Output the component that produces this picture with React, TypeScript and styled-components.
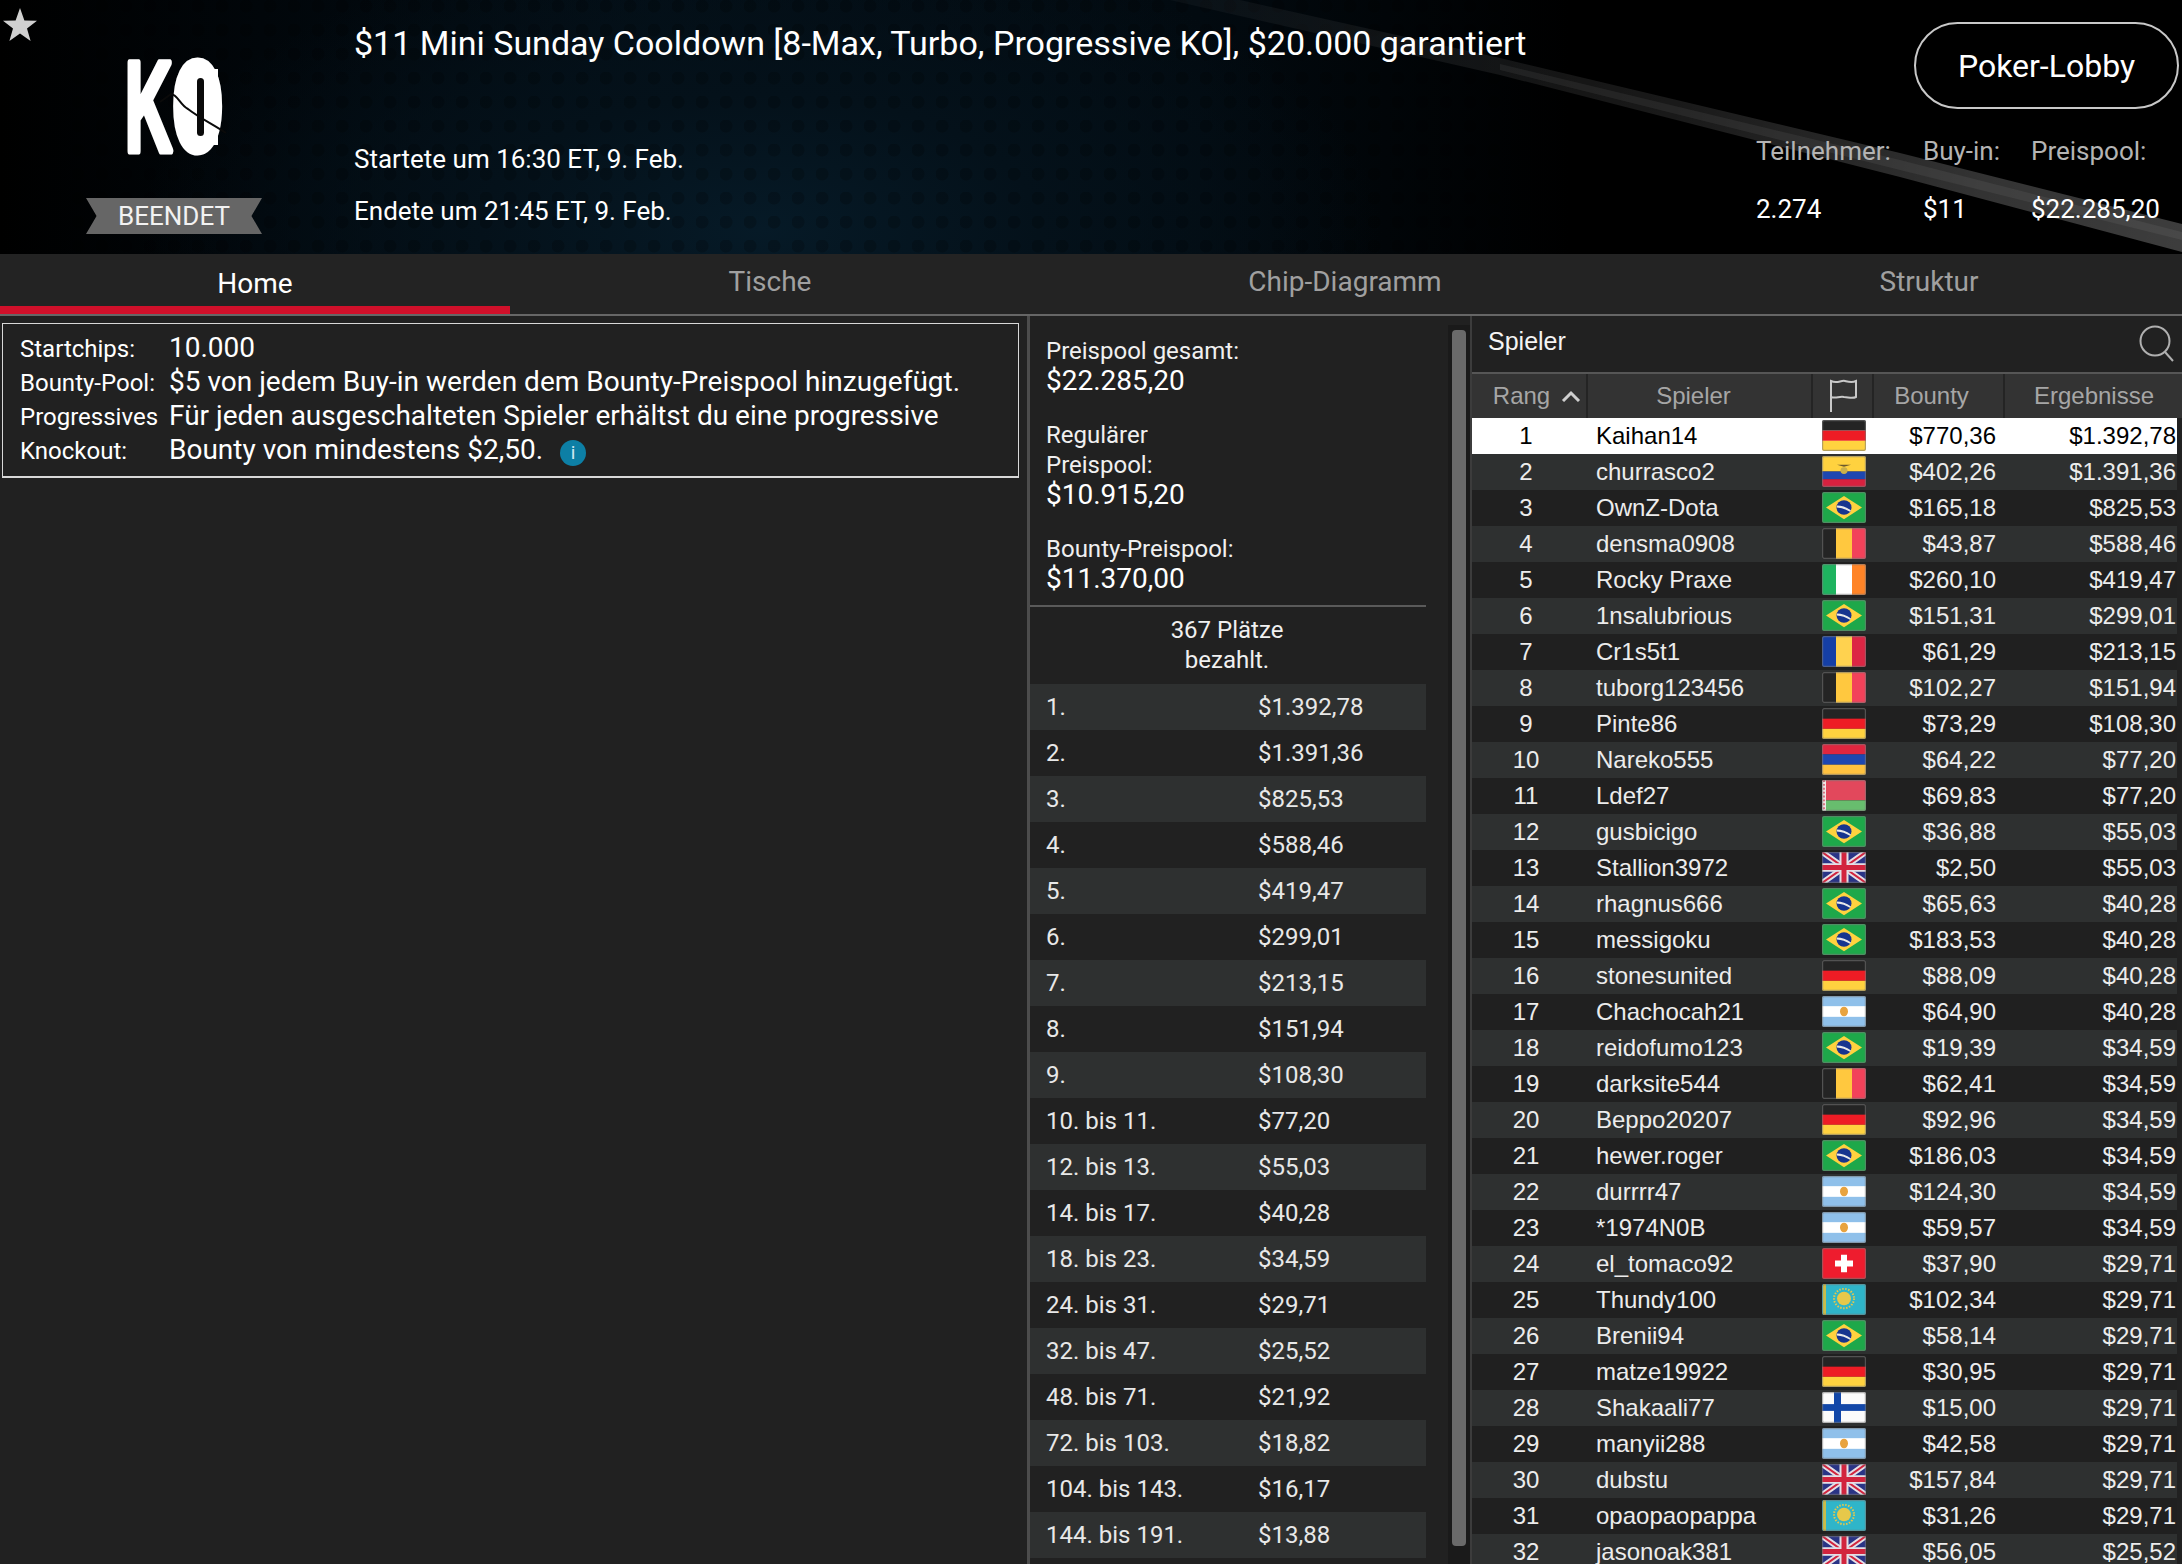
import React from "react";
import styled, { createGlobalStyle } from "styled-components";

const Global = createGlobalStyle`
  html, body { margin: 0; padding: 0; background: #212121; }
  body { width: 2182px; height: 1564px; overflow: hidden; font-family: Roboto, "Liberation Sans", sans-serif; color: #fff; }
  * { box-sizing: border-box; }
`;

const Page = styled.div`
  width: 2182px;
  height: 1564px;
  display: flex;
  flex-direction: column;
  overflow: hidden;
`;

const Hero = styled.header`
  position: relative;
  flex: 0 0 254px;
  display: flex;
  overflow: hidden;
  background:
    radial-gradient(circle at 6px 6px, rgba(0, 0, 0, 0.2) 0 6px, transparent 7px) 0 0 / 24px 24px,
    radial-gradient(ellipse 620px 300px at 760px 230px, #061a27 0%, #04111a 45%, rgba(0, 0, 0, 0) 100%),
    linear-gradient(90deg, #000 0%, #01060a 12%, #030e16 30%, #020a10 55%, #000 72%);
`;

const StreakArt = styled.svg`
  position: absolute;
  inset: 0;
`;

const StarIcon = styled.svg`
  position: absolute;
  left: 2px;
  top: 7px;
`;

const LogoColumn = styled.div`
  position: relative;
  flex: 0 0 354px;
  display: flex;
  flex-direction: column;
  align-items: flex-start;
  padding: 59px 0 0 86px;
`;

const KoLogo = styled.svg`
  margin-left: 36px;
  display: block;
  overflow: visible;
`;

const Ribbon = styled.div`
  margin-top: 43px;
  width: 176px;
  height: 36px;
  background: #666;
  clip-path: polygon(0 0, 100% 0, 94% 50%, 100% 100%, 0 100%, 6% 50%);
  display: flex;
  align-items: center;
  justify-content: center;
  font-size: 26px;
  color: #f2f2f2;
`;

const InfoColumn = styled.div`
  position: relative;
  flex: 1;
  padding-top: 23px;
`;

const Title = styled.h1`
  margin: 0 0 76px;
  font-size: 34px;
  line-height: 40px;
  font-weight: 400;
  color: #fff;
`;

const TimeLine = styled.div`
  font-size: 26px;
  line-height: 40px;
  margin-bottom: 12px;
  color: #fff;
`;

const StatsColumn = styled.div`
  position: relative;
  flex: 0 0 426px;
  display: flex;
  flex-direction: column;
  padding-top: 22px;
`;

const LobbyButton = styled.button`
  align-self: flex-end;
  margin-right: 3px;
  width: 265px;
  height: 87px;
  border: 2px solid #c8c8c8;
  border-radius: 44px;
  background: #000;
  color: #fff;
  font-family: Roboto, sans-serif;
  font-size: 32px;
  padding: 0;
`;

const StatsGrid = styled.div`
  margin-top: 24px;
  display: grid;
  grid-template-columns: 167px 108px 1fr;
  row-gap: 22px;
  line-height: 36px;
  font-size: 26px;
`;

const StatLabel = styled.div`
  color: #b4b4b4;
`;

const StatValue = styled.div`
  color: #fff;
`;

const TabBar = styled.nav`
  flex: 0 0 60px;
  display: flex;
  background: #232323;
  border-bottom: 2px solid #666;
`;

const Tab = styled.div<{ $w: number; $active?: boolean; $shift?: number }>`
  position: relative;
  flex: 0 0 ${(p) => p.$w}px;
  display: flex;
  align-items: center;
  justify-content: center;
  height: ${(p) => (p.$active ? 60 : 53)}px;
  padding-left: ${(p) => p.$shift ?? 0}px;
  padding-top: ${(p) => (p.$active ? 6 : 1)}px;
  font-size: 28px;
  color: ${(p) => (p.$active ? "#fff" : "#a0a0a0")};
  border-bottom: ${(p) => (p.$active ? "8px solid #d0102a" : "none")};
`;

const Main = styled.main`
  flex: 1;
  display: flex;
  min-height: 0;
  overflow: hidden;
`;

const LeftPane = styled.section`
  flex: 0 0 1027px;
  padding: 7px 0 0 2px;
`;

const RulesBox = styled.div`
  width: 1017px;
  height: 155px;
  border: 1px solid #d8d8d8;
  border-bottom-width: 2px;
  padding: 7px 0 0 17px;
  display: grid;
  grid-template-columns: 149px 1fr;
  grid-auto-rows: 34px;
  align-items: baseline;
`;

const RuleLabel = styled.div`
  font-size: 24px;
  color: #fff;
`;

const RuleValue = styled.div`
  font-size: 28px;
  color: #fff;
`;

const InfoDot = styled.span`
  display: inline-flex;
  align-items: center;
  justify-content: center;
  width: 26px;
  height: 26px;
  margin-left: 17px;
  border-radius: 50%;
  background: #0d7fa5;
  color: #cfe8f0;
  font-size: 19px;
  vertical-align: 0;
`;

const MiddlePane = styled.section`
  flex: 0 0 444px;
  display: flex;
  border-left: 3px solid #4c4c4c;
  border-right: 2px solid #3c3c3c;
`;

const PrizeColumn = styled.div`
  flex: 0 0 396px;
`;

const PoolBlock = styled.div`
  padding: 20px 0 11px 16px;
  border-bottom: 2px solid #5a5a5a;
`;

const PoolItem = styled.div`
  margin-bottom: 24px;
  &:last-child { margin-bottom: 0; }
`;

const PoolLabel = styled.div`
  font-size: 24px;
  line-height: 30px;
  color: #f0f0f0;
`;

const PoolValue = styled.div`
  font-size: 28px;
  line-height: 30px;
  color: #fff;
`;

const PaidNote = styled.div`
  text-align: center;
  font-size: 24px;
  line-height: 30px;
  padding: 8px 2px 9px 0;
  color: #f0f0f0;
`;

const PayRow = styled.div<{ $alt: boolean }>`
  height: 46px;
  display: grid;
  grid-template-columns: 212px 1fr;
  padding: 0 0 0 16px;
  align-items: center;
  font-size: 24px;
  color: #e8e8e8;
  background: ${(p) => (p.$alt ? "#2e3030" : "#212121")};
`;

const ScrollTrack = styled.div`
  flex: 0 0 20px;
  margin: 9px 0 0 22px;
  padding: 5px 4px 0;
  background: #1a1a1a;
`;

const ScrollThumb = styled.div`
  width: 14px;
  height: 1216px;
  background: #6a6a6a;
  border-radius: 4px;
`;

const PlayersPane = styled.section`
  flex: 1;
  display: flex;
  flex-direction: column;
  min-width: 0;
`;

const PlayersBar = styled.div`
  flex: 0 0 58px;
  display: flex;
  align-items: center;
  justify-content: space-between;
  padding: 0 6px 5px 16px;
  font-family: "Liberation Sans", Arial, sans-serif;
  font-size: 25px;
  color: #f4f4f4;
  border-bottom: 2px solid #565656;
`;

const SearchIcon = styled.svg`
  margin-top: 3px;
`;

const HeadRow = styled.div`
  flex: 0 0 44px;
  display: grid;
  grid-template-columns: 116px 225px 61px 131px 1fr;
  font-family: "Liberation Sans", Arial, sans-serif;
  font-size: 24px;
  color: #a6a6a6;
  background: #333;
  width: 711px;
`;

const HeadCell = styled.div<{ $left?: number; $right?: number }>`
  display: flex;
  align-items: center;
  justify-content: center;
  gap: 11px;
  padding-left: ${(p) => p.$left ?? 0}px;
  padding-right: ${(p) => p.$right ?? 0}px;
  border-right: 2px solid #242424;
  &:last-child { border-right: none; }
`;

const Row = styled.div<{ $alt: boolean; $first: boolean }>`
  flex: 0 0 36px;
  width: 705px;
  display: grid;
  grid-template-columns: 116px 225px 61px 131px 1fr;
  align-items: center;
  font-family: "Liberation Sans", Arial, sans-serif;
  font-size: 24px;
  color: ${(p) => (p.$first ? "#000" : "#ececec")};
  background: ${(p) => (p.$first ? "#fff" : p.$alt ? "#2e3030" : "#202020")};
`;

const RankCell = styled.div`
  text-align: center;
  padding-right: 8px;
`;

const NameCell = styled.div`
  padding-left: 8px;
`;

const FlagCell = styled.div`
  padding: 0 0 2px 9px;
  display: flex;
`;

const MoneyCell = styled.div<{ $pad: number }>`
  text-align: right;
  padding-right: ${(p) => p.$pad}px;
`;

const FlagSvg = styled.svg`
  display: block;
  width: 44px;
  height: 31px;
  border-radius: 2px;
`;

type Code = "de" | "ec" | "br" | "be" | "ie" | "ro" | "am" | "by" | "gb" | "ar" | "ch" | "kz" | "fi";

function FlagArt({ code }: { code: Code }) {
  switch (code) {
    case "de":
      return (
        <>
          <rect width="44" height="11" fill="#242424" />
          <rect y="11" width="44" height="10.5" fill="#ee1c25" />
          <rect y="21.5" width="44" height="10.5" fill="#ffd23f" />
        </>
      );
    case "ec":
      return (
        <>
          <rect width="44" height="16" fill="#ffd23f" />
          <rect y="16" width="44" height="8" fill="#1e47b0" />
          <rect y="24" width="44" height="8" fill="#d8213f" />
          <circle cx="22" cy="15" r="3.5" fill="#c9b04a" />
          <path d="M15 9 h14 l-7 2z" fill="#6b5a2c" />
        </>
      );
    case "br":
      return (
        <>
          <rect width="44" height="32" fill="#1ea84a" />
          <path d="M22 4 L40 16 L22 28 L4 16Z" fill="#ffd23f" />
          <circle cx="22" cy="16" r="7.5" fill="#17358f" />
          <path d="M15 14 Q22 14 29 19 L28 20.5 Q22 16.5 14.8 16Z" fill="#e8e8e8" />
        </>
      );
    case "be":
      return (
        <>
          <rect width="14" height="32" fill="#242424" />
          <rect x="14" width="16" height="32" fill="#ffc83f" />
          <rect x="30" width="14" height="32" fill="#f2425a" />
        </>
      );
    case "ie":
      return (
        <>
          <rect width="14" height="32" fill="#1eb35f" />
          <rect x="14" width="16" height="32" fill="#fff" />
          <rect x="30" width="14" height="32" fill="#ff8427" />
        </>
      );
    case "ro":
      return (
        <>
          <rect width="14" height="32" fill="#153fa6" />
          <rect x="14" width="16" height="32" fill="#ffd24f" />
          <rect x="30" width="14" height="32" fill="#dc2644" />
        </>
      );
    case "am":
      return (
        <>
          <rect width="44" height="10.7" fill="#e0263f" />
          <rect y="10.7" width="44" height="10.7" fill="#1e47b0" />
          <rect y="21.4" width="44" height="10.6" fill="#ffc23f" />
        </>
      );
    case "by":
      return (
        <>
          <rect width="44" height="21" fill="#e2485c" />
          <rect y="21" width="44" height="11" fill="#68bd6e" />
          <rect width="4" height="32" fill="#f0e6e6" />
          <path d="M2 0v32" stroke="#d2485c" strokeWidth="1.4" strokeDasharray="2 2" />
        </>
      );
    case "gb":
      return (
        <>
          <rect width="44" height="32" fill="#2a3486" />
          <path d="M0 0 L44 32 M44 0 L0 32" stroke="#e4dfe6" strokeWidth="6" />
          <path d="M0 0 L44 32 M44 0 L0 32" stroke="#d2243e" strokeWidth="2" />
          <path d="M22 0v32 M0 16h44" stroke="#e4dfe6" strokeWidth="9" />
          <path d="M22 0v32 M0 16h44" stroke="#d2243e" strokeWidth="5" />
        </>
      );
    case "ar":
      return (
        <>
          <rect width="44" height="32" fill="#8fc0ea" />
          <rect y="10.5" width="44" height="11" fill="#fff" />
          <ellipse cx="22" cy="16" rx="4" ry="5" fill="#e8a33f" />
        </>
      );
    case "ch":
      return (
        <>
          <rect width="44" height="32" fill="#ee1c2e" />
          <path d="M19 7h6v6h6v6h-6v6h-6v-6h-6v-6h6z" fill="#fff" />
        </>
      );
    case "kz":
      return (
        <>
          <rect width="44" height="32" fill="#2fb5c9" />
          <rect x="1" width="3" height="32" fill="#c9bc4a" />
          <circle cx="22" cy="15" r="7" fill="#e6c84a" />
          <circle cx="22" cy="15" r="10" fill="none" stroke="#e6c84a" strokeWidth="2" strokeDasharray="1.5 1.5" />
        </>
      );
    case "fi":
      return (
        <>
          <rect width="44" height="32" fill="#fbfbfb" />
          <rect x="12" width="7" height="32" fill="#1247a8" />
          <rect y="12.5" width="44" height="7" fill="#1247a8" />
        </>
      );
  }
}

function Flag({ code }: { code: Code }) {
  return (
    <FlagSvg viewBox="0 0 44 32" preserveAspectRatio="none">
      <FlagArt code={code} />
      <rect x="0.5" y="0.5" width="43" height="31" rx="2" fill="none" stroke="rgba(120,120,120,0.55)" strokeWidth="1.4" />
    </FlagSvg>
  );
}

const players: [string, Code, string, string][] = [
  ["Kaihan14", "de", "$770,36", "$1.392,78"],
  ["churrasco2", "ec", "$402,26", "$1.391,36"],
  ["OwnZ-Dota", "br", "$165,18", "$825,53"],
  ["densma0908", "be", "$43,87", "$588,46"],
  ["Rocky Praxe", "ie", "$260,10", "$419,47"],
  ["1nsalubrious", "br", "$151,31", "$299,01"],
  ["Cr1s5t1", "ro", "$61,29", "$213,15"],
  ["tuborg123456", "be", "$102,27", "$151,94"],
  ["Pinte86", "de", "$73,29", "$108,30"],
  ["Nareko555", "am", "$64,22", "$77,20"],
  ["Ldef27", "by", "$69,83", "$77,20"],
  ["gusbicigo", "br", "$36,88", "$55,03"],
  ["Stallion3972", "gb", "$2,50", "$55,03"],
  ["rhagnus666", "br", "$65,63", "$40,28"],
  ["messigoku", "br", "$183,53", "$40,28"],
  ["stonesunited", "de", "$88,09", "$40,28"],
  ["Chachocah21", "ar", "$64,90", "$40,28"],
  ["reidofumo123", "br", "$19,39", "$34,59"],
  ["darksite544", "be", "$62,41", "$34,59"],
  ["Beppo20207", "de", "$92,96", "$34,59"],
  ["hewer.roger", "br", "$186,03", "$34,59"],
  ["durrrr47", "ar", "$124,30", "$34,59"],
  ["*1974N0B", "ar", "$59,57", "$34,59"],
  ["el_tomaco92", "ch", "$37,90", "$29,71"],
  ["Thundy100", "kz", "$102,34", "$29,71"],
  ["Brenii94", "br", "$58,14", "$29,71"],
  ["matze19922", "de", "$30,95", "$29,71"],
  ["Shakaali77", "fi", "$15,00", "$29,71"],
  ["manyii288", "ar", "$42,58", "$29,71"],
  ["dubstu", "gb", "$157,84", "$29,71"],
  ["opaopaopappa", "kz", "$31,26", "$29,71"],
  ["jasonoak381", "gb", "$56,05", "$25,52"],
];

const payouts: [string, string][] = [
  ["1.", "$1.392,78"],
  ["2.", "$1.391,36"],
  ["3.", "$825,53"],
  ["4.", "$588,46"],
  ["5.", "$419,47"],
  ["6.", "$299,01"],
  ["7.", "$213,15"],
  ["8.", "$151,94"],
  ["9.", "$108,30"],
  ["10. bis 11.", "$77,20"],
  ["12. bis 13.", "$55,03"],
  ["14. bis 17.", "$40,28"],
  ["18. bis 23.", "$34,59"],
  ["24. bis 31.", "$29,71"],
  ["32. bis 47.", "$25,52"],
  ["48. bis 71.", "$21,92"],
  ["72. bis 103.", "$18,82"],
  ["104. bis 143.", "$16,17"],
  ["144. bis 191.", "$13,88"],
];

export default function App() {
  return (
    <Page>
      <Global />
      <Hero>
        <StreakArt width="2182" height="254" viewBox="0 0 2182 254">
          <defs>
            <linearGradient id="streak" x1="1170" y1="0" x2="2182" y2="240" gradientUnits="userSpaceOnUse">
              <stop offset="0" stopColor="#fff" stopOpacity="0.03" />
              <stop offset="0.5" stopColor="#fff" stopOpacity="0.1" />
              <stop offset="0.8" stopColor="#fff" stopOpacity="0.2" />
              <stop offset="1" stopColor="#fff" stopOpacity="0.24" />
            </linearGradient>
          </defs>
          <polygon points="1170,0 1240,0 1500,58 1900,153 2182,224 2182,252 1900,177 1500,75" fill="url(#streak)" />
          <polygon points="1500,64 1900,160 2182,232 2182,240 1900,170 1500,70" fill="#fff" fillOpacity="0.06" />
        </StreakArt>
        <LogoColumn>
          <StarIcon width="36" height="36" viewBox="0 0 36 36">
            <path d="M18 1 L22.4 13.6 L35 13.8 L25 21.6 L28.6 34 L18 26.6 L7.4 34 L11 21.6 L1 13.8 L13.6 13.6Z" fill="#d0d0d0" />
          </StarIcon>
          <KoLogo width="104" height="96" viewBox="0 0 104 96">
            <text
              x="3"
              y="92"
              fontFamily="Liberation Sans"
              fontWeight="700"
              fontSize="128"
              textLength="98"
              lengthAdjust="spacingAndGlyphs"
              fill="#fff"
              stroke="#fff"
              strokeWidth="7"
              strokeLinejoin="round"
            >
              KO
            </text>
            <rect x="64" y="10" width="32" height="76" fill="#fff" />
            <rect x="75" y="19" width="7" height="58" rx="3.5" fill="#0a0a0a" />
            <path d="M38 43 L49 35 C56 36 58 46 66 50 C76 58 92 66 104 74" fill="none" stroke="#0a0a0a" strokeWidth="2" />
          </KoLogo>
          <Ribbon>BEENDET</Ribbon>
        </LogoColumn>
        <InfoColumn>
          <Title>$11 Mini Sunday Cooldown [8-Max, Turbo, Progressive KO], $20.000 garantiert</Title>
          <TimeLine>Startete um 16:30 ET, 9. Feb.</TimeLine>
          <TimeLine>Endete um 21:45 ET, 9. Feb.</TimeLine>
        </InfoColumn>
        <StatsColumn>
          <LobbyButton>Poker-Lobby</LobbyButton>
          <StatsGrid>
            <StatLabel>Teilnehmer:</StatLabel>
            <StatLabel>Buy-in:</StatLabel>
            <StatLabel>Preispool:</StatLabel>
            <StatValue>2.274</StatValue>
            <StatValue>$11</StatValue>
            <StatValue>$22.285,20</StatValue>
          </StatsGrid>
        </StatsColumn>
      </Hero>
      <TabBar>
        <Tab $w={510} $active>Home</Tab>
        <Tab $w={520}>Tische</Tab>
        <Tab $w={630}>Chip-Diagramm</Tab>
        <Tab $w={522} $shift={16}>Struktur</Tab>
      </TabBar>
      <Main>
        <LeftPane>
          <RulesBox>
            <RuleLabel>Startchips:</RuleLabel>
            <RuleValue>10.000</RuleValue>
            <RuleLabel>Bounty-Pool:</RuleLabel>
            <RuleValue>$5 von jedem Buy-in werden dem Bounty-Preispool hinzugefügt.</RuleValue>
            <RuleLabel>Progressives</RuleLabel>
            <RuleValue>Für jeden ausgeschalteten Spieler erhältst du eine progressive</RuleValue>
            <RuleLabel>Knockout:</RuleLabel>
            <RuleValue>
              Bounty von mindestens $2,50.<InfoDot>i</InfoDot>
            </RuleValue>
          </RulesBox>
        </LeftPane>
        <MiddlePane>
          <PrizeColumn>
            <PoolBlock>
              <PoolItem>
                <PoolLabel>Preispool gesamt:</PoolLabel>
                <PoolValue>$22.285,20</PoolValue>
              </PoolItem>
              <PoolItem>
                <PoolLabel>Regulärer</PoolLabel>
                <PoolLabel>Preispool:</PoolLabel>
                <PoolValue>$10.915,20</PoolValue>
              </PoolItem>
              <PoolItem>
                <PoolLabel>Bounty-Preispool:</PoolLabel>
                <PoolValue>$11.370,00</PoolValue>
              </PoolItem>
            </PoolBlock>
            <PaidNote>
              367 Plätze
              <br />
              bezahlt.
            </PaidNote>
            {payouts.map(([place, amount], i) => (
              <PayRow key={place} $alt={i % 2 === 0}>
                <span>{place}</span>
                <span>{amount}</span>
              </PayRow>
            ))}
          </PrizeColumn>
          <ScrollTrack>
            <ScrollThumb />
          </ScrollTrack>
        </MiddlePane>
        <PlayersPane>
          <PlayersBar>
            <span>Spieler</span>
            <SearchIcon width="38" height="38" viewBox="0 0 38 38" fill="none" stroke="#b0b0b0" strokeWidth="2">
              <circle cx="17" cy="17" r="14.5" />
              <path d="M27 28 L35 37" />
            </SearchIcon>
          </PlayersBar>
          <HeadRow>
            <HeadCell $left={16}>
              <span>Rang</span>
              <svg width="20" height="12" viewBox="0 0 20 12" fill="none" stroke="#cfcfcf" strokeWidth="3">
                <path d="M2 11 L10 3 L18 11" />
              </svg>
            </HeadCell>
            <HeadCell $right={12}>Spieler</HeadCell>
            <HeadCell>
              <svg width="30" height="34" viewBox="0 0 30 34" fill="none" stroke="#c8c8c8" strokeWidth="2">
                <path d="M3 33 V2 C9 5 13 1 17 2 C21 3 24 4 28 2 V18 C24 20 20 18 16 18 C11 17 8 20 3 18" />
              </svg>
            </HeadCell>
            <HeadCell $right={14}>Bounty</HeadCell>
            <HeadCell>Ergebnisse</HeadCell>
          </HeadRow>
          {players.map(([name, code, bounty, result], i) => (
            <Row key={name} $first={i === 0} $alt={i % 2 === 1}>
              <RankCell>{i + 1}</RankCell>
              <NameCell>{name}</NameCell>
              <FlagCell>
                <Flag code={code} />
              </FlagCell>
              <MoneyCell $pad={9}>{bounty}</MoneyCell>
              <MoneyCell $pad={1}>{result}</MoneyCell>
            </Row>
          ))}
        </PlayersPane>
      </Main>
    </Page>
  );
}
